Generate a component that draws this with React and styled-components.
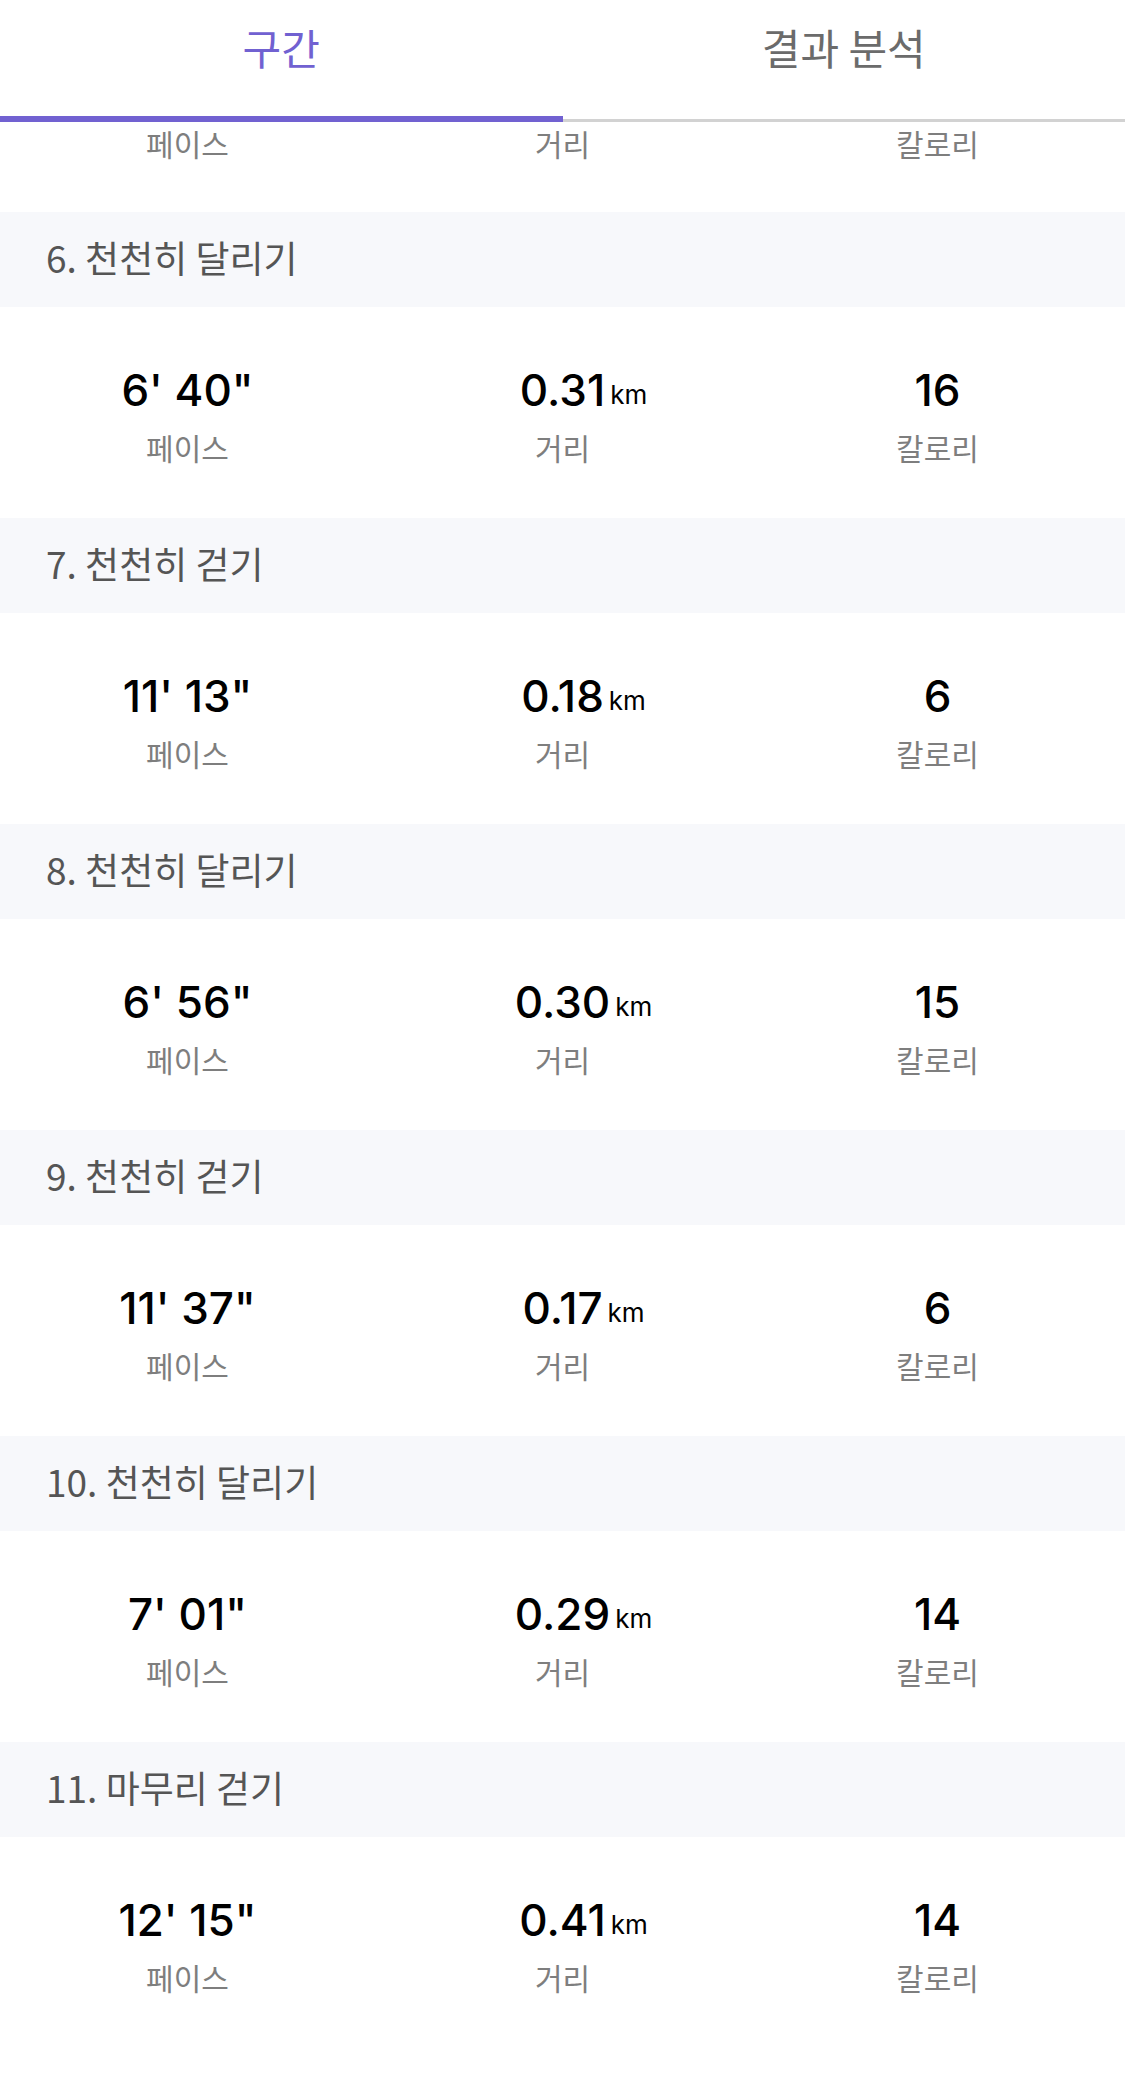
import React from 'react';
import styled, { createGlobalStyle } from 'styled-components';

const GlobalStyle = createGlobalStyle`
  html, body {
    margin: 0;
    padding: 0;
    background: #ffffff;
  }
  body {
    font-family: "Inter", "Noto Sans CJK KR", sans-serif;
    -webkit-font-smoothing: antialiased;
  }
`;

const Page = styled.div`
  width: 1125px;
  height: 2083px;
  display: flex;
  flex-direction: column;
  overflow: hidden;
  background: #fff;
`;

const TabBar = styled.div`
  display: flex;
  height: 122px;
  flex-shrink: 0;
  background: #fff;
`;

const Tab = styled.div`
  flex: 1;
  display: flex;
  align-items: flex-start;
  justify-content: center;
  padding-top: 16px;
  box-sizing: border-box;
  font-family: "Noto Sans CJK KR", sans-serif;
  font-size: 42px;
  color: ${(p) => (p.active ? '#7161d1' : '#6b6b6b')};
  border-bottom: ${(p) => (p.active ? '6px solid #7161d1' : '3px solid #d2d2d2')};
`;

const List = styled.div`
  flex: 1;
  overflow: hidden;
`;

const SectionHeader = styled.div`
  height: 95px;
  box-sizing: border-box;
  padding: 0 0 5px 46px;
  background: #f7f8fb;
  display: flex;
  align-items: center;
  font-family: "Noto Sans CJK KR", sans-serif;
  font-size: 37px;
  color: #555;
`;

const StatRow = styled.div`
  height: ${(p) => (p.partial ? '90px' : '211px')};
  box-sizing: border-box;
  padding-top: ${(p) => (p.partial ? '1px' : '56px')};
  display: grid;
  grid-template-columns: repeat(3, 1fr);
`;

const Stat = styled.div`
  display: flex;
  flex-direction: column;
  align-items: center;
`;

const Value = styled.div`
  position: relative;
  font-family: "Inter", "Noto Sans CJK KR", sans-serif;
  font-weight: 500;
  font-size: 44px;
  line-height: 54px;
  color: #000;
  white-space: pre;
`;

const Unit = styled.span`
  position: absolute;
  left: 100%;
  bottom: 0;
  margin-left: 5px;
  font-size: 26px;
  font-weight: 400;
  line-height: 44px;
`;

const Label = styled.div`
  margin-top: ${(p) => (p.partial ? '0' : '10px')};
  font-family: "Noto Sans CJK KR", sans-serif;
  font-size: 30px;
  line-height: 40px;
  color: #7e7e7e;
`;

const segments = [
  { title: '6. 천천히 달리기', pace: "6' 40\"", dist: '0.31', cal: '16' },
  { title: '7. 천천히 걷기', pace: "11' 13\"", dist: '0.18', cal: '6' },
  { title: '8. 천천히 달리기', pace: "6' 56\"", dist: '0.30', cal: '15' },
  { title: '9. 천천히 걷기', pace: "11' 37\"", dist: '0.17', cal: '6' },
  { title: '10. 천천히 달리기', pace: "7' 01\"", dist: '0.29', cal: '14' },
  { title: '11. 마무리 걷기', pace: "12' 15\"", dist: '0.41', cal: '14' },
];

const labels = ['페이스', '거리', '칼로리'];

// bottom of the previous segment, scrolled up under the tabs
const PartialRow = () => (
  <StatRow partial>
    {labels.map((l) => (
      <Stat key={l}>
        <Label partial>{l}</Label>
      </Stat>
    ))}
  </StatRow>
);

const Segment = ({ seg }) => (
  <>
    <SectionHeader>{seg.title}</SectionHeader>
    <StatRow>
      <Stat>
        <Value>{seg.pace}</Value>
        <Label>{labels[0]}</Label>
      </Stat>
      <Stat>
        <Value>
          {seg.dist}
          <Unit>km</Unit>
        </Value>
        <Label>{labels[1]}</Label>
      </Stat>
      <Stat>
        <Value>{seg.cal}</Value>
        <Label>{labels[2]}</Label>
      </Stat>
    </StatRow>
  </>
);

export default function App() {
  return (
    <>
      <GlobalStyle />
      <Page>
        <TabBar>
          <Tab active>구간</Tab>
          <Tab>결과 분석</Tab>
        </TabBar>
        <List>
          <PartialRow />
          {segments.map((s, i) => (
            <Segment key={i} seg={s} />
          ))}
        </List>
      </Page>
    </>
  );
}
